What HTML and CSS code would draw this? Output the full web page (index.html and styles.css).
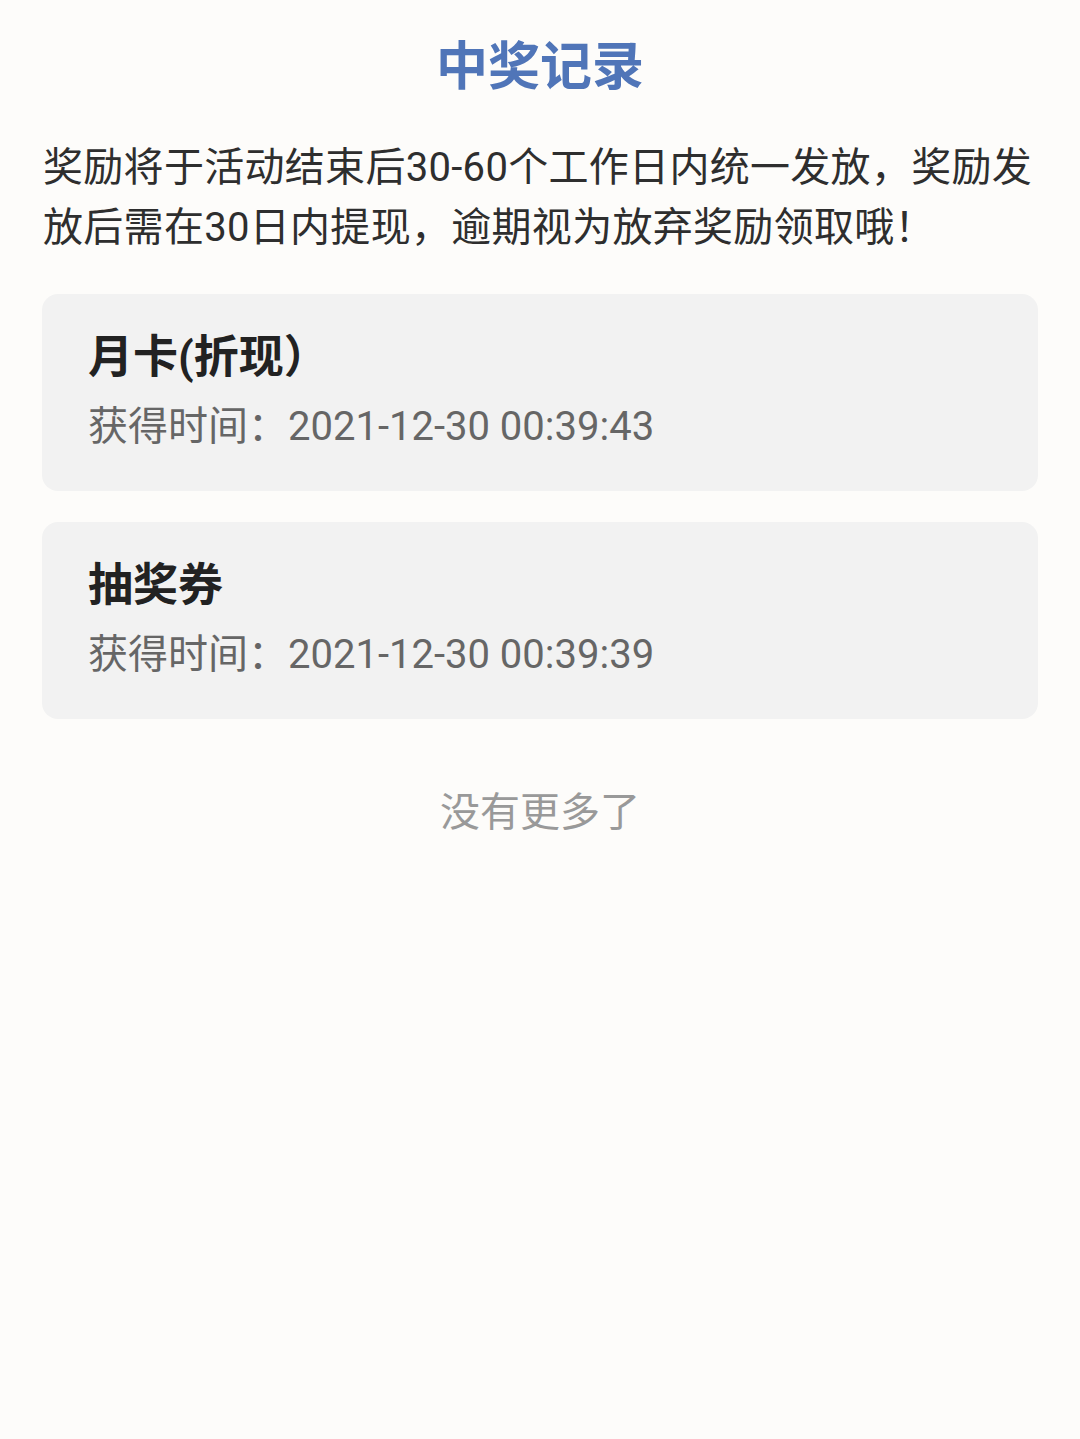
FILE: index.html
```html
<!DOCTYPE html>
<html lang="zh-CN">
  <head>
    <meta charset="UTF-8" />
    <meta name="viewport" content="width=device-width, initial-scale=1.0" />
    <title>中奖记录</title>
    <link rel="stylesheet" href="styles.css">
  </head>
  <body>
    <div class="page">
      <h1 class="title">中奖记录</h1>
      <p class="notice">
        奖励将于活动结束后30-60个工作日内统一发放，奖励发放后需在30日内提现，逾期视为放弃奖励领取哦！
      </p>

      <div class="record-list">
        <div class="record">
          <div class="record-name">月卡(折现）</div>
          <div class="record-time">获得时间：2021-12-30 00:39:43</div>
        </div>
        <div class="record">
          <div class="record-name">抽奖券</div>
          <div class="record-time">获得时间：2021-12-30 00:39:39</div>
        </div>
      </div>

      <div class="no-more">没有更多了</div>
    </div>
  </body>
</html>
```

FILE: styles.css
```css
body {
  font-family: Roboto, "Noto Sans CJK SC", sans-serif;
  background-color: #fdfcfa;
  margin: 0;
  min-height: 100vh;
}

.page {
  padding: 32px 42px 0 42px;
}

.title {
  margin: 0;
  font-size: 52px;
  line-height: 72px;
  font-weight: 700;
  text-align: center;
  color: #5075b8;
}

.notice {
  margin: 34px 0 0 1px;
  font-size: 40px;
  line-height: 60px;
  letter-spacing: 0.3px;
  color: #2e2e2e;
}

.record-list {
  display: flex;
  flex-direction: column;
  gap: 31px;
  margin-top: 36px;
}

.record {
  background-color: #f2f2f2;
  border-radius: 16px;
  padding: 36px 46px;
}

.record-name {
  font-size: 45px;
  line-height: 56px;
  font-weight: 700;
  color: #222;
}

.record-time {
  margin-top: 13px;
  font-size: 40px;
  line-height: 56px;
  color: #666;
}

.no-more {
  margin-top: 64px;
  font-size: 40px;
  line-height: 60px;
  text-align: center;
  color: #999;
}
```
